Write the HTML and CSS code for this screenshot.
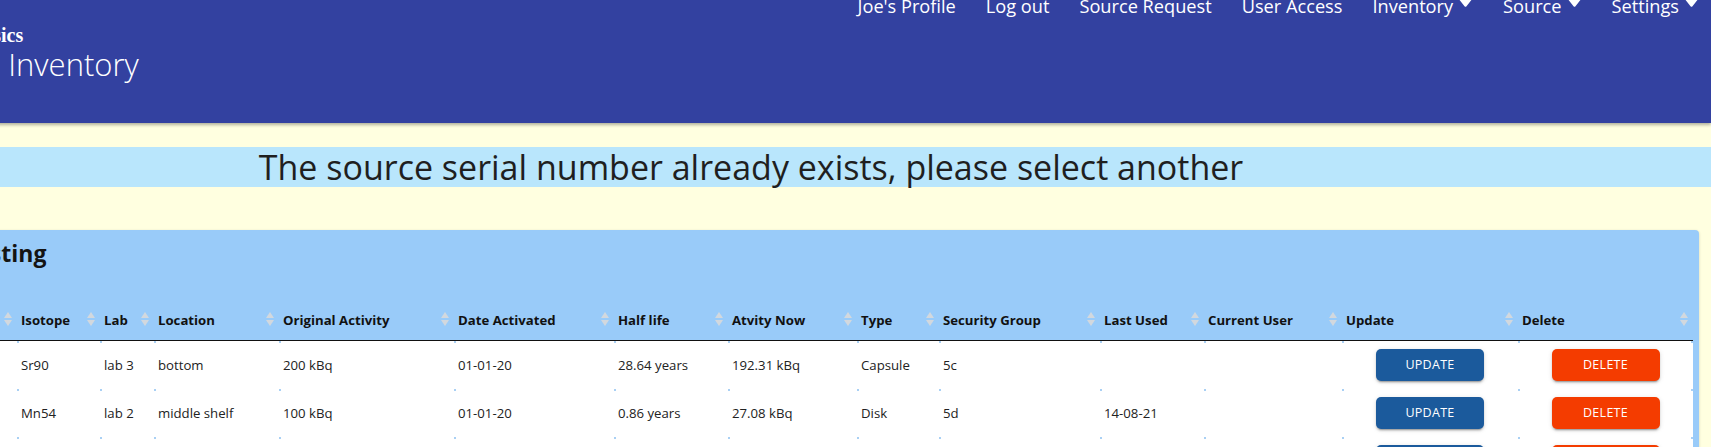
FILE: index.html
```html
<!DOCTYPE html>
<html lang="en">
<head>
<meta charset="utf-8">
<title>Source Inventory</title>
<link rel="stylesheet" href="styles.css">
</head>
<body>
<div class="page">
  <header class="topbar">
    <div class="brand">
      <div class="brand-title">Medical Physics</div>
      <div class="brand-sub">Source Inventory</div>
    </div>
    <nav class="nav">
      <a class="nav-item">Joe's Profile</a>
      <a class="nav-item">Log out</a>
      <a class="nav-item">Source Request</a>
      <a class="nav-item">User Access</a>
      <a class="nav-item">Inventory<svg class="caret" viewBox="0 0 15 10"><path d="M2 1.5 H13 L7.5 8.5 Z" fill="#fff" stroke="#fff" stroke-width="2.5" stroke-linejoin="round"/></svg></a>
      <a class="nav-item">Source<svg class="caret" viewBox="0 0 15 10"><path d="M2 1.5 H13 L7.5 8.5 Z" fill="#fff" stroke="#fff" stroke-width="2.5" stroke-linejoin="round"/></svg></a>
      <a class="nav-item">Settings<svg class="caret" viewBox="0 0 15 10"><path d="M2 1.5 H13 L7.5 8.5 Z" fill="#fff" stroke="#fff" stroke-width="2.5" stroke-linejoin="round"/></svg></a>
    </nav>
  </header>

  <div class="alert">The source serial number already exists, please select another</div>

  <section class="card">
    <h2 class="card-title">Source Listing</h2>
    <table class="listing">
      <colgroup>
        <col style="width:208px">
        <col style="width:83px">
        <col style="width:54px">
        <col style="width:125px">
        <col style="width:175px">
        <col style="width:160px">
        <col style="width:114px">
        <col style="width:129px">
        <col style="width:82px">
        <col style="width:161px">
        <col style="width:104px">
        <col style="width:138px">
        <col style="width:176px">
        <col style="width:175px">
      </colgroup>
      <thead>
        <tr>
          <th><span class="sort"></span>Serial Number</th>
          <th><span class="sort"></span>Isotope</th>
          <th><span class="sort"></span>Lab</th>
          <th><span class="sort"></span>Location</th>
          <th><span class="sort"></span>Original Activity</th>
          <th><span class="sort"></span>Date Activated</th>
          <th><span class="sort"></span>Half life</th>
          <th><span class="sort"></span>Atvity Now</th>
          <th><span class="sort"></span>Type</th>
          <th><span class="sort"></span>Security Group</th>
          <th><span class="sort"></span>Last Used</th>
          <th><span class="sort"></span>Current User</th>
          <th><span class="sort"></span>Update</th>
          <th><span class="sort"></span>Delete</th>
        </tr>
      </thead>
      <tbody>
        <tr>
          <td>SR-0001</td>
          <td>Sr90</td>
          <td>lab 3</td>
          <td>bottom</td>
          <td>200 kBq</td>
          <td>01-01-20</td>
          <td>28.64 years</td>
          <td>192.31 kBq</td>
          <td>Capsule</td>
          <td>5c</td>
          <td></td>
          <td></td>
          <td class="act"><button class="btn btn-update">UPDATE</button></td>
          <td class="act last"><button class="btn btn-delete">DELETE</button></td>
        </tr>
        <tr>
          <td>MN-0002</td>
          <td>Mn54</td>
          <td>lab 2</td>
          <td>middle shelf</td>
          <td>100 kBq</td>
          <td>01-01-20</td>
          <td>0.86 years</td>
          <td>27.08 kBq</td>
          <td>Disk</td>
          <td>5d</td>
          <td>14-08-21</td>
          <td></td>
          <td class="act"><button class="btn btn-update">UPDATE</button></td>
          <td class="act last"><button class="btn btn-delete">DELETE</button></td>
        </tr>
        <tr>
          <td>CS-0003</td>
          <td>Cs137</td>
          <td>lab 1</td>
          <td>top shelf</td>
          <td>370 kBq</td>
          <td>01-01-20</td>
          <td>30.05 years</td>
          <td>353.12 kBq</td>
          <td>Capsule</td>
          <td>5a</td>
          <td></td>
          <td></td>
          <td class="act"><button class="btn btn-update">UPDATE</button></td>
          <td class="act last"><button class="btn btn-delete">DELETE</button></td>
        </tr>
      </tbody>
    </table>
  </section>
</div>
</body>
</html>
```

FILE: styles.css
```css
html, body {
  margin: 0;
  padding: 0;
}

body {
  background: #ffffe0;
  overflow: hidden;
  font-family: "Open Sans", "Noto Sans", "DejaVu Sans", sans-serif;
  color: #212121;
}

/* the document is 1920px wide and scrolled 209px to the right */
.page {
  width: 1920px;
  margin-left: -209px;
}

.topbar {
  height: 123px;
  box-sizing: border-box;
  background: #3341a0;
  display: flex;
  justify-content: space-between;
  align-items: flex-start;
  padding: 0 12px 0 95px;
  box-shadow: 0 2px 3px rgba(0, 0, 0, 0.3);
  color: #fff;
}

.brand {
  display: flex;
  flex-direction: column;
  align-items: flex-start;
  padding-top: 23px;
}

.brand-title {
  font-family: "Liberation Serif", "Times New Roman", serif;
  font-weight: 700;
  font-size: 20px;
  line-height: 24px;
}

.brand-sub {
  font-weight: 300;
  font-size: 31px;
  line-height: 34px;
  margin-left: 17px;
}

.nav {
  display: flex;
  gap: 30px;
  margin-top: -6px;
  font-size: 18.2px;
  line-height: 24px;
}

.nav-item {
  display: flex;
  align-items: center;
  gap: 5px;
  white-space: nowrap;
  color: #fff;
  text-decoration: none;
}

.caret {
  width: 15px;
  height: 10px;
  margin-bottom: 8px;
}

.alert {
  margin-top: 24px;
  height: 40px;
  background: #b9e6fc;
  text-align: center;
  font-size: 34px;
  line-height: 40px;
  color: #1f1f1f;
  white-space: nowrap;
}

.card {
  margin: 43px 12px 0;
  padding: 7px 6px 0;
  background: #99cbf9;
  border-radius: 4px;
  box-shadow: 0 1px 3px rgba(0, 0, 0, 0.18);
}

.card-title {
  margin: 0 0 31px 77px;
  font-size: 23px;
  line-height: 32px;
  font-weight: 700;
  color: #141414;
}

.listing {
  table-layout: fixed;
  width: 1884px;
  border-collapse: separate;
  border-spacing: 0;
  font-size: 13.2px;
  color: #222;
}

.listing th {
  padding: 10px 5px 10px 4px;
  line-height: 20px;
  text-align: left;
  font-weight: 700;
  color: #111;
  border-bottom: 1px solid #111;
  white-space: nowrap;
  overflow: hidden;
}

.sort {
  float: right;
  display: flex;
  flex-direction: column;
  gap: 2px;
  margin-top: 2px;
}

.sort::before,
.sort::after {
  content: "";
  width: 0;
  height: 0;
  border-left: 4px solid transparent;
  border-right: 4px solid transparent;
}

.sort::before {
  border-bottom: 6px solid #d2d8de;
}

.sort::after {
  border-top: 6px solid #d2d8de;
}

.listing td {
  padding: 8px 4px;
  line-height: 32px;
  white-space: nowrap;
  background: linear-gradient(#a9d0f4, #a9d0f4) left top / 2px 2px no-repeat, #fff;
}

.listing td.last {
  background: linear-gradient(#a9d0f4, #a9d0f4) left top / 2px 2px no-repeat,
              linear-gradient(#a9d0f4, #a9d0f4) right top / 2px 2px no-repeat, #fff;
}

.listing td.act {
  text-align: center;
}

.btn {
  display: inline-block;
  vertical-align: top;
  width: 108px;
  height: 32px;
  border: 0;
  border-radius: 5px;
  padding: 0;
  font-family: "Open Sans", "Noto Sans", sans-serif;
  font-size: 12.5px;
  letter-spacing: 0.3px;
  line-height: 32px;
  color: #fff;
  box-shadow: 0 3px 1px -2px rgba(0, 0, 0, 0.2), 0 2px 2px 0 rgba(0, 0, 0, 0.14), 0 1px 5px 0 rgba(0, 0, 0, 0.12);
}

.btn-update {
  background: #1b5a9c;
}

.btn-delete {
  background: #f43c00;
}
```
